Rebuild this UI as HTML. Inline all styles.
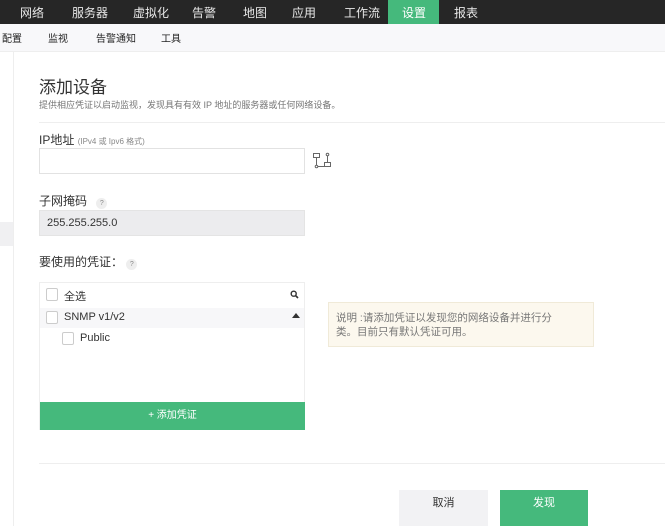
<!DOCTYPE html>
<html><head><meta charset="utf-8"><style>
*{margin:0;padding:0;box-sizing:border-box}
body{width:665px;height:526px;overflow:hidden;background:#fff;font-family:"Liberation Sans","Noto Sans CJK SC",sans-serif;color:#333;position:relative}
.a{position:absolute}
.top{left:0;top:0;width:665px;height:24px;background:#262626}
.top span{position:absolute;top:4px;font-size:12px;color:#e8e8e8}
.sub{left:0;top:24px;width:665px;height:28px;background:#f8f8fa;border-bottom:1px solid #eee}
.sub span{position:absolute;top:6px;font-size:10px;color:#222}
.cb{position:absolute;width:12px;height:13px;border:1px solid #ccc;border-radius:2px;background:#fff}
</style></head><body>
<div class="a top">
<span style="left:20px">网络</span><span style="left:72px">服务器</span><span style="left:133px">虚拟化</span><span style="left:192px">告警</span><span style="left:243px">地图</span><span style="left:292px">应用</span><span style="left:344px">工作流</span>
<div class="a" style="left:388px;top:0;width:51px;height:24px;background:#45b97c"></div>
<span style="left:402px;color:#fff">设置</span><span style="left:454px">报表</span>
</div>
<div class="a sub"><span style="left:2px">配置</span><span style="left:48px">监视</span><span style="left:96px">告警通知</span><span style="left:161px">工具</span></div>
<div class="a" style="left:13px;top:52px;width:1px;height:474px;background:#eee"></div>
<div class="a" style="left:0;top:222px;width:13px;height:24px;background:#f0f0f2"></div>
<div class="a" style="left:39px;top:73px;font-size:17px;color:#333">添加设备</div>
<div class="a" style="left:39px;top:98px;font-size:9px;color:#777">提供相应凭证以启动监视，发现具有有效 IP 地址的服务器或任何网络设备。</div>
<div class="a" style="left:39px;top:122px;width:626px;height:1px;background:#eee"></div>
<div class="a" style="left:39px;top:131px;font-size:12px;color:#333">IP地址 <span style="font-size:8px;color:#888">(IPv4 或 Ipv6 格式)</span></div>
<div class="a" style="left:39px;top:148px;width:266px;height:26px;border:1px solid #e2e2e2;background:#fff"></div>
<svg class="a" style="left:312px;top:151px" width="20" height="20" viewBox="0 0 20 20" fill="none" stroke="#666" stroke-width="1"><rect x="1.5" y="2.5" width="6" height="4"/><line x1="4.5" y1="6.5" x2="4.5" y2="14"/><circle cx="4.5" cy="15.5" r="1.3"/><circle cx="15.5" cy="3.5" r="1.3"/><line x1="15.5" y1="5" x2="15.5" y2="11"/><rect x="12.5" y="11.5" width="6" height="4"/><line x1="6" y1="15.5" x2="12.5" y2="15.5"/></svg>
<div class="a" style="left:39px;top:192px;font-size:12px">子网掩码 <span style="display:inline-block;width:11px;height:11px;border-radius:50%;background:#eee;font-size:7px;color:#888;text-align:center;line-height:11px;margin-left:6px">?</span></div>
<div class="a" style="left:39px;top:210px;width:266px;height:26px;background:#ececee;border:1px solid #e4e4e4;font-size:11px;padding:6px 7px;color:#333">255.255.255.0</div>
<div class="a" style="left:39px;top:253px;font-size:12px">要使用的凭证： <span style="display:inline-block;width:11px;height:11px;border-radius:50%;background:#eee;font-size:7px;color:#888;text-align:center;line-height:11px">?</span></div>
<div class="a" style="left:39px;top:282px;width:266px;height:148px;border:1px solid #eee"></div>
<div class="cb" style="left:46px;top:288px"></div>
<div class="a" style="left:64px;top:288px;font-size:11px">全选</div>
<svg class="a" style="left:290px;top:290px" width="9" height="9" viewBox="0 0 9 9"><circle cx="3.7" cy="3.7" r="2.5" fill="none" stroke="#333" stroke-width="1.4"/><line x1="5.5" y1="5.5" x2="8" y2="8" stroke="#333" stroke-width="1.6"/></svg>
<div class="a" style="left:40px;top:308px;width:264px;height:20px;background:#f7f7f9"></div>
<div class="cb" style="left:46px;top:311px"></div>
<div class="a" style="left:64px;top:311px;font-size:11px">SNMP v1/v2</div>
<div class="a" style="left:292px;top:313px;width:0;height:0;border-left:4px solid transparent;border-right:4px solid transparent;border-bottom:5px solid #333"></div>
<div class="cb" style="left:62px;top:332px"></div>
<div class="a" style="left:80px;top:332px;font-size:11px">Public</div>
<div class="a" style="left:40px;top:402px;width:265px;height:28px;background:#45b97c;color:#fff;font-size:10px;text-align:center;line-height:28px">+ 添加凭证</div>
<div class="a" style="left:328px;top:302px;width:266px;height:45px;background:#fcf8ee;border:1px solid #f0ead8;font-size:10.5px;color:#777;padding:8px 30px 8px 7px;line-height:14px">说明 :请添加凭证以发现您的网络设备并进行分类。目前只有默认凭证可用。</div>
<div class="a" style="left:39px;top:463px;width:626px;height:1px;background:#eee"></div>
<div class="a" style="left:399px;top:490px;width:89px;height:36px;background:#f2f2f4;font-size:11px;text-align:center;line-height:26px;color:#333">取消</div>
<div class="a" style="left:500px;top:490px;width:88px;height:36px;background:#45b97c;font-size:11px;text-align:center;line-height:26px;color:#fff">发现</div>
</body></html>
